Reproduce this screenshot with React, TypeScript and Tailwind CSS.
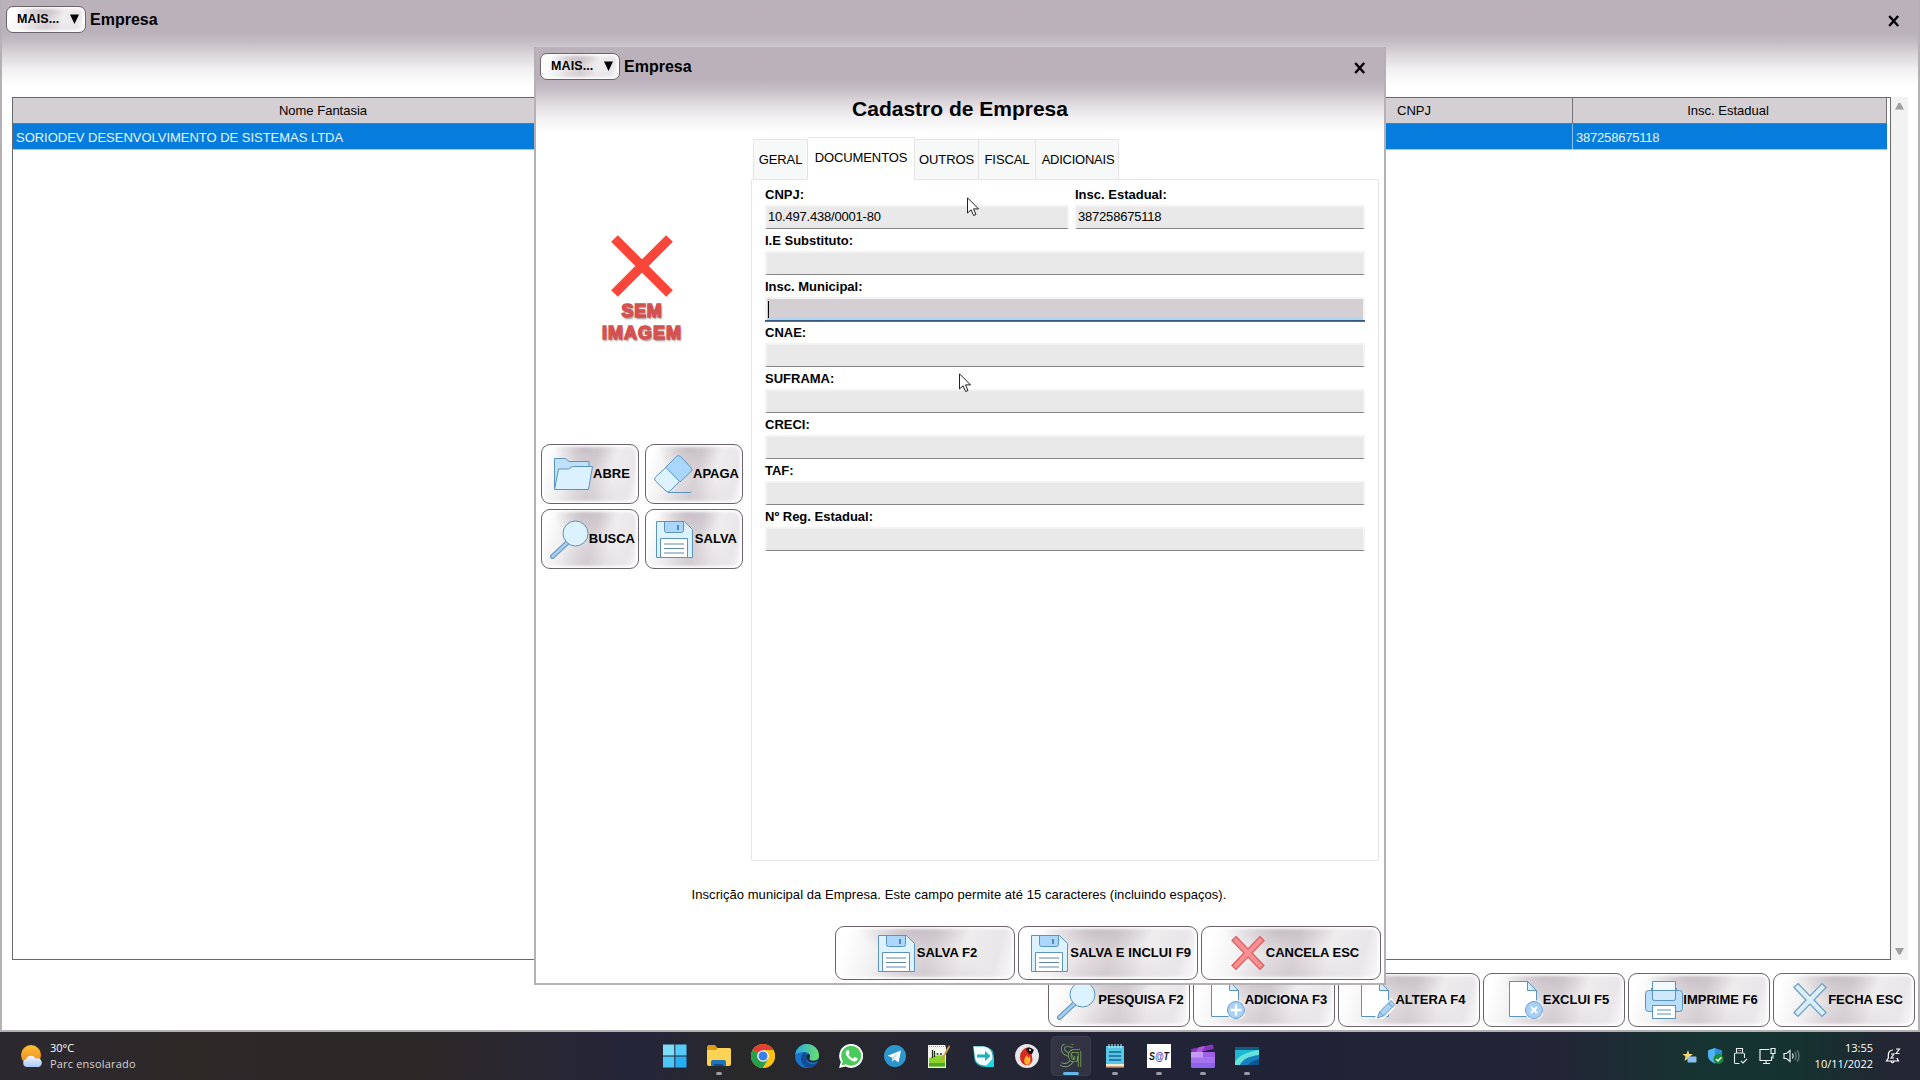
import type { ReactNode } from 'react';
import { clsx } from 'clsx';

type Field = { label: string; value?: string; focused?: boolean };

const FIELDS: Field[] = [
  { label: 'I.E Substituto:' },
  { label: 'Insc. Municipal:', focused: true },
  { label: 'CNAE:' },
  { label: 'SUFRAMA:' },
  { label: 'CRECI:' },
  { label: 'TAF:' },
  { label: 'Nº Reg. Estadual:' },
];

const TABS = [
  { label: 'GERAL', width: 'w-[55px]' },
  { label: 'DOCUMENTOS', width: 'w-[107px]', active: true },
  { label: 'OUTROS', width: 'w-[64px]' },
  { label: 'FISCAL', width: 'w-[57px]' },
  { label: 'ADICIONAIS', width: 'w-[83px]' },
];

const METAL =
  'border border-[#6b656b] bg-[radial-gradient(ellipse_32%_55%_at_44%_0%,rgba(186,176,184,0.75),transparent),radial-gradient(ellipse_34%_50%_at_52%_100%,rgba(200,192,198,0.5),transparent),linear-gradient(105deg,#ffffff_6%,#f3f2f3_22%,#e2dee1_40%,#dad5d9_52%,#efecee_70%,#e9e6e9_88%,#fbfbfb_100%)] shadow-[inset_0_0_3px_2px_rgba(255,255,255,0.9)]';

export default function App() {
  return (
    <div className="relative flex h-[1080px] w-[1920px] flex-col overflow-hidden bg-white font-['Liberation_Sans',Arial,sans-serif] text-[13px] text-black">
      <MainWindow />
      <Taskbar />
      <CompanyDialog />
      <Cursor className="left-[967px] top-[197px]" />
      <Cursor className="left-[959px] top-[373px]" />
    </div>
  );
}

function TitleBar() {
  return (
    <div className="flex h-[33px] shrink-0 items-end pl-[4px] pr-[18px]">
      <div className={clsx('flex h-[27px] w-[80px] items-center justify-between rounded-[7px] pb-px pl-[10px] pr-[6px]', METAL)}>
        <span className="text-[12.5px] font-bold tracking-[0.1px]">MAIS...</span>
        <svg width="9" height="10" viewBox="0 0 9 10">
          <path d="M0 0.5h9L4.5 10z" />
        </svg>
      </div>
      <span className="ml-[4px] flex-1 pb-[3px] text-[16px] font-bold leading-[20px]">Empresa</span>
      <svg className="mb-[6px]" width="12" height="12" viewBox="0 0 12 12">
        <path d="M1.200 1l9 10M10.200 1L1.200 11" stroke="#000" strokeWidth="2.400" />
      </svg>
    </div>
  );
}

function MainWindow() {
  return (
    <main className="flex h-[1032px] flex-col border-x-2 border-b-2 border-[#b4b0b4] bg-[linear-gradient(180deg,#bab2bb_0px,#bab1ba_33px,#c5bdc4_42px,#dad5da_54px,#f2f0f2_70px,#ffffff_86px)]">
      <TitleBar />
      <div className="mt-[64px] flex h-[863px] pl-[10px]">
        <div className="w-[1879px] border border-[#6a696c] bg-white pr-[3px]">
          <div className="flex h-[26px] border-b border-[#77727a] bg-[#d4cfd3] text-center leading-[25px]">
            <div className="w-[621px] border-r border-[#77727a]">Nome Fantasia</div>
            <div className="w-[622px] border-r border-[#77727a]" />
            <div className="w-[317px] border-r border-[#77727a]">CNPJ</div>
            <div className="flex-1 border-r border-[#77727a] pr-[3px]">Insc. Estadual</div>
          </div>
          <div className="flex h-[26px] border-b border-[#9ccdf2] bg-[#067cdc] leading-[27px] text-[#e4f6ff]">
            <div className="w-[1560px] whitespace-nowrap border-r border-[#8ec5f0] pl-[3px] tracking-[-0.02px]">
              SORIODEV DESENVOLVIMENTO DE SISTEMAS LTDA
            </div>
            <div className="pl-[3px] tracking-[-0.2px]">387258675118</div>
          </div>
        </div>
        <div className="flex w-[17px] flex-col items-center justify-between bg-[#f3f2f3] py-[5px]">
          <svg width="9" height="8" viewBox="0 0 9 8"><path d="M3.500 1h2L9 7.500H0z" fill="#a09ea0" /></svg>
          <svg width="9" height="8" viewBox="0 0 9 8"><path d="M3.500 7.500h2L9 1H0z" fill="#a09ea0" /></svg>
        </div>
      </div>
      <div className="mt-[13px] flex justify-end gap-[3px] pr-[3px]">
        <ActionButton label="PESQUISA F2" icon={<SearchIcon />} className="h-[54px] w-[142px] pl-[3px]" />
        <ActionButton label="ADICIONA F3" icon={<PageIcon kind="add" />} className="h-[54px] w-[142px] pl-[10px]" tight />
        <ActionButton label="ALTERA F4" icon={<PageIcon kind="edit" />} className="h-[54px] w-[142px] pl-[9px]" tight />
        <ActionButton label="EXCLUI F5" icon={<PageIcon kind="delete" />} className="h-[54px] w-[142px] pl-[10px]" tight />
        <ActionButton label="IMPRIME F6" icon={<PrinterIcon />} className="h-[54px] w-[142px] pl-[5px]" tight />
        <ActionButton label="FECHA ESC" icon={<CrossIcon fill="#d9effc" stroke="#6d9cc0" />} className="h-[54px] w-[142px] pl-[8px]" tight />
      </div>
    </main>
  );
}

function CompanyDialog() {
  return (
    <section className="absolute left-[534px] top-[47px] flex h-[938px] w-[852px] flex-col border-x-2 border-b-2 border-[#b4b0b4] bg-[linear-gradient(180deg,#bab2bb_0px,#bab1ba_33px,#c5bdc4_42px,#dad5da_54px,#f2f0f2_70px,#ffffff_86px)]">
      <TitleBar />
      <h1 className="mt-[17px] text-center text-[21px] font-bold leading-[24px]">Cadastro de Empresa</h1>
      <div className="mt-[16px] flex h-[724px]">
        {/* image preview and its actions */}
        <aside className="flex w-[215px] flex-col">
          <div className="flex h-[307px] flex-col items-center pr-[3px] pt-[98px]">
            <svg width="62" height="62" viewBox="0 0 62 62">
              <path d="M3.500 3.500l55 55M58.500 3.500l-55 55" stroke="#fa463a" strokeWidth="9.500" />
            </svg>
            <div className="mt-[3px] text-center text-[18px] font-bold leading-[22px] text-[#dc5555] [-webkit-text-stroke:1.5px_#d25050] [text-shadow:1px_2px_2px_#9a8585]">
              <div className="tracking-[0.7px]">SEM</div>
              <div className="tracking-[1px]">IMAGEM</div>
            </div>
          </div>
          <div className="grid grid-cols-[98px_98px] gap-x-[6px] gap-y-[5px] pl-[5px]">
            <ActionButton label="ABRE" icon={<FolderIcon />} className="h-[60px] pl-[4px]" tight />
            <ActionButton label="APAGA" icon={<EraserIcon />} className="h-[60px] pr-[3px]" end tight />
            <ActionButton label="BUSCA" icon={<SearchIcon />} className="h-[60px] pr-[3px]" end tight />
            <ActionButton label="SALVA" icon={<FloppyIcon />} className="h-[60px] pr-[5px]" end />
          </div>
        </aside>

        <div className="flex w-[628px] flex-col">
          <div className="flex h-[42px] items-end pl-[2px]">
            {TABS.map((t) => (
              <div
                key={t.label}
                className={clsx(
                  'relative flex items-center justify-center border-r border-t border-[#e4e4e6]',
                  t.width,
                  t.active ? 'z-10 -mb-px h-[43px] bg-white pb-[2px]' : 'h-[40px] bg-[#f7f8f8] pt-px',
                  t.label === 'GERAL' && 'border-l',
                  t.label === 'ADICIONAIS' ? 'pl-[2px] tracking-[-0.25px]' : 'tracking-[-0.1px]',
                )}
              >
                {t.label}
              </div>
            ))}
          </div>
          <div className="flex h-[682px] flex-col border border-[#e6e6e8] bg-white pl-[13px] pr-[13px] pt-[7px]">
            <div className="flex gap-[6px]">
              <div className="w-[304px]">
                <FieldRow label="CNPJ:" value="10.497.438/0001-80" />
              </div>
              <div className="flex-1">
                <FieldRow label="Insc. Estadual:" value="387258675118" />
              </div>
            </div>
            {FIELDS.map((f) => (
              <FieldRow key={f.label} {...f} />
            ))}
          </div>
        </div>
      </div>
      <p className="mt-[26px] pr-[2px] text-center text-[13px] leading-[16px] tracking-[0.05px]">
        Inscrição municipal da Empresa. Este campo permite até 15 caracteres (incluindo espaços).
      </p>
      <div className="mt-[23px] flex justify-end gap-[3px] pr-[3px]">
        <ActionButton label="SALVA F2" icon={<FloppyIcon />} className="h-[54px] w-[180px] pl-[5px]" />
        <ActionButton label="SALVA E INCLUI F9" icon={<FloppyIcon />} className="h-[54px] w-[180px] pr-[6px] tracking-[0.07px]" end />
        <ActionButton label="CANCELA ESC" icon={<CrossIcon fill="#fb8f8f" stroke="#d95c62" />} className="h-[54px] w-[180px] pl-[8px]" tight />
      </div>
    </section>
  );
}

function FieldRow({ label, value, focused }: Field) {
  return (
    <div className="flex h-[46px] flex-col">
      <span className="h-[18px] font-bold leading-[16px]">{label}</span>
      <div
        className={clsx(
          'flex items-center border-x-2 border-t-2 border-[#f3f3f3] pb-[1px] pl-[1px] tracking-[-0.2px]',
          focused
            ? 'h-[23px] bg-[#d4cfd2] shadow-[0_-2px_0_#b4d3ee_inset,0_1px_0_#355a7c,0_2px_0_#4b7196]'
            : 'h-[24px] border-b border-b-[#858585] bg-[#e9e9e9]',
        )}
      >
        {focused ? <span className="h-[17px] w-px bg-black" /> : value}
      </div>
    </div>
  );
}

type ActionButtonProps = { label: string; icon: ReactNode; className: string; end?: boolean; tight?: boolean };

function ActionButton({ label, icon, className, end, tight }: ActionButtonProps) {
  return (
    <button
      type="button"
      className={clsx(
        'flex items-center whitespace-nowrap rounded-[9px] font-bold',
        end ? 'justify-end' : 'justify-center',
        METAL,
        className,
      )}
    >
      {icon}
      <span className={tight ? 'ml-0' : 'ml-[2px]'}>{label}</span>
    </button>
  );
}

function FolderIcon() {
  return (
    <svg className="shrink-0" width="39" height="34" viewBox="0 0 39 34" stroke="#5c93bd" strokeWidth="1">
      <path d="M.5 32.500V1.500h11l3.500 3h20v9H5z" fill="#bfe0fa" />
      <path d="M.5 32.500L4.500 12h10l4-2.500h20L34.500 32.500z" fill="#dcf1fe" />
    </svg>
  );
}

function EraserIcon() {
  return (
    <svg className="shrink-0" width="39" height="40" viewBox="0 0 39 40" stroke="#5c93bd" strokeWidth="1">
      <path d="M11.500 13.500L22.500 2.500q2-2 4 0l10.500 11q2 2 0 4L26 28z" fill="#a9d6fb" />
      <path d="M12 13.500L25.500 27.500 16 37q-2 2-4 0L1.500 27q-2-2 0-4z" fill="#dff3ff" />
      <path d="M14 38.500h23" />
    </svg>
  );
}

function SearchIcon() {
  return (
    <svg className="shrink-0" width="39" height="39" viewBox="0 0 39 39" stroke="#5c93bd">
      <path d="M17.500 22.500L2.500 36.500" strokeWidth="5" strokeLinecap="round" />
      <path d="M17.500 22.500L2.500 36.500" stroke="#a4cdef" strokeWidth="3" strokeLinecap="round" />
      <circle cx="25.500" cy="13.500" r="12.500" fill="#dcf2fe" />
    </svg>
  );
}

function FloppyIcon() {
  return (
    <svg className="shrink-0" width="37" height="37" viewBox="0 0 37 37" stroke="#5c93bd">
      <path d="M.5.5h28l8 8v28H.5z" fill="#dcf2fe" />
      <path d="M8.500.5h19v9q0 2-2 2h-15q-2 0-2-2z" fill="#a9d6fa" />
      <path d="M22 4v5" stroke="#3f76a3" strokeWidth="1.600" />
      <path d="M4.500 36.500v-19h27v19z" fill="#fff" />
      <path d="M8 23h20M8 27.500h20M8 32h20" stroke="#5f87a8" />
    </svg>
  );
}

function CrossIcon({ fill, stroke }: { fill: string; stroke: string }) {
  return (
    <svg className="mr-[1px] shrink-0" width="34" height="36" viewBox="0 0 34 36">
      <path
        d="M5 1.500L17 14 29 1.500 33 5.500 21 18 33 30.500 29 34.500 17 22 5 34.500 1 30.500 13 18 1 5.500z"
        fill={fill}
        stroke={stroke}
        strokeWidth="1.200"
      />
    </svg>
  );
}

function PageIcon({ kind }: { kind: 'add' | 'edit' | 'delete' }) {
  return (
    <svg className="shrink-0" width="34" height="38" viewBox="0 0 34 38" stroke="#5c93bd">
      <path d="M.5.5h18l9 9v26H.5z" fill="#fff" />
      <path d="M18.500.5v9h9z" fill="#d5ecfd" />
      {kind === 'edit' ? (
        <g>
          <path d="M16 37.500l2-6.500L30 20l4 4-11.500 11.500z" fill="#b5dafa" stroke="#fff" strokeWidth="4" />
          <path d="M16.500 37l2-6L30 19.500l4 4L22.500 35z" fill="#a9d3f7" />
          <path d="M18.500 31l4 4M27.500 22l4 4" />
        </g>
      ) : (
        <g>
          <circle cx="25" cy="29" r="10" fill="#fff" stroke="none" />
          <circle cx="25" cy="29" r="8.500" fill="#a9d0f5" stroke="#6d9fd0" />
          {kind === 'add' ? (
            <path d="M25 23.500v11M19.500 29h11" stroke="#fff" strokeWidth="2.400" />
          ) : (
            <path d="M22 26l6 6M28 26l-6 6" stroke="#fff" strokeWidth="2" />
          )}
        </g>
      )}
    </svg>
  );
}

function PrinterIcon() {
  return (
    <svg className="shrink-0" width="38" height="38" viewBox="0 0 38 38" stroke="#5c93bd">
      <rect x="6.500" y="7.500" width="25" height="6" fill="#8fc3ef" />
      <rect x=".5" y="9.500" width="37" height="21" rx="3" fill="#b9defb" />
      <path d="M7.500.5h23v17q0 2-2 2h-19q-2 0-2-2z" fill="#f3faff" />
      <path d="M7.500 9.500h23v8q0 2-2 2h-19q-2 0-2-2z" fill="#cfe8fc" />
      <rect x="7.500" y="24.500" width="23" height="13" fill="#fff" />
      <path d="M12 29h14M12 33h14" />
    </svg>
  );
}

function Cursor({ className }: { className: string }) {
  return (
    <svg className={clsx('absolute', className)} width="13" height="20" viewBox="0 0 13 20">
      <path d="M.5.800v15.200l3.600-3.200 2.500 5.700 2.400-1-2.500-5.600h5z" fill="#fff" stroke="#222" />
    </svg>
  );
}

/* ---------- taskbar ---------- */

function Taskbar() {
  return (
    <footer className="relative flex h-[48px] shrink-0 items-center bg-[linear-gradient(90deg,#2b2930_0px,#2e2827_190px,#2c2727_420px,#24253a_640px,#292829_740px,#242634_960px,#202337_1280px,#222536_1560px,#163431_1700px,#14322f_1800px,#252634_1900px)] font-['Open_Sans','Noto_Sans',sans-serif] text-[11px] text-white">
      <div className="flex w-[653px] items-center gap-[6px] pl-[20px]">
        <svg width="24" height="24" viewBox="0 0 24 24">
          <defs>
            <linearGradient id="sun" x2="0" y2="1">
              <stop stopColor="#fbc02f" />
              <stop offset="1" stopColor="#ef8424" />
            </linearGradient>
            <linearGradient id="cloud" x2="0" y2="1">
              <stop stopColor="#f0f6ff" />
              <stop offset="1" stopColor="#aac8f5" />
            </linearGradient>
          </defs>
          <circle cx="11" cy="11" r="10" fill="url(#sun)" />
          <path d="M6.500 23a4 4 0 0 1-.3-7.800 5 5 0 0 1 9.300-.6 4.300 4.300 0 1 1 3.500 8.400z" fill="url(#cloud)" />
        </svg>
        <div className="leading-[16px]">
          <div>30°C</div>
          <div className="tracking-[0.18px] text-[#d6d2d6]">Parc ensolarado</div>
        </div>
      </div>
      <div className="flex items-center">
        {APPS.map((app) => (
          <div key={app.name} className="flex h-[48px] w-[44px] items-center justify-center">
            <div
              className={clsx(
                'relative flex h-[40px] w-[40px] items-center justify-center rounded-[4px]',
                app.state === 'active' && 'border border-[#3a3b4c] bg-[#323343]',
              )}
            >
              <svg width="24" height="24" viewBox="0 0 24 24">{app.art}</svg>
              {app.state === 'open' && <span className="absolute bottom-[1px] h-[3px] w-[6px] rounded-full bg-[#9c9ca6]" />}
              {app.state === 'active' && <span className="absolute bottom-0 h-[3px] w-[16px] rounded-full bg-[#62b8ea]" />}
            </div>
          </div>
        ))}
      </div>
      <div className="flex flex-1 items-center justify-end pr-[19px]">
        <Tray />
        <div className="ml-[12px] w-[60px] text-right leading-[16px]">
          <div>13:55</div>
          <div>10/11/2022</div>
        </div>
        <svg className="ml-[12px]" width="16" height="17" viewBox="0 0 16 17" fill="none" stroke="#fff" strokeWidth="1.200">
          <path d="M8 2C5 2 3.300 4 3.300 7v3L1.500 13h12l-1.600-3M6 13.500q1.500 2.500 3 0" />
          <path d="M6 6h3L6 10h3M11 1h3.500L11 5.500h3.500" strokeWidth="1.100" />
        </svg>
      </div>
    </footer>
  );
}

function Tray() {
  return (
    <div className="flex items-center gap-[9px]">
      <svg className="mr-px" width="15" height="15" viewBox="0 0 15 15">
        <path d="M6 1l1.300 4H11L8 7.500 9 12 6 9.500 2.500 12l1-4.500L.5 5h4z" fill="#f5d76a" />
        <rect x="5.500" y="7.500" width="9" height="6" rx="1" fill="#8cc0f0" />
      </svg>
      <svg width="17" height="18" viewBox="0 0 17 18">
        <path d="M8 1l7 2.500v5Q15 13 8 16.500 1 13 1 8.500v-5z" fill="#2b8fe0" />
        <path d="M8 1v15.500Q1 13 1 8.500v-5z" fill="#52b4f3" />
        <circle cx="11.500" cy="12" r="5" fill="#1b8a34" />
        <path d="M9 12l2 2 3.300-3.800" fill="none" stroke="#fff" strokeWidth="1.400" />
      </svg>
      <svg width="15" height="18" viewBox="0 0 15 18" fill="none" stroke="#e8eeee" strokeWidth="1.100">
        <path d="M3.500 6V1.500h6V6M1.500 16V7.500Q1.500 6 3 6h7q1.500 0 1.500 1.500V11M1.500 16.500h5M8 14l2 2 4-4M5.500 3.500h.8M7.300 3.500H8" />
      </svg>
      <svg className="ml-[2px]" width="17" height="18" viewBox="0 0 17 18" fill="none" stroke="#e8eeee" strokeWidth="1.200">
        <path d="M10.500 2.500H1v11h11.500v-4M4 16.500h7M7 13.500v3M12 1.500h4v5h-4zM14 6.500v5" />
      </svg>
      <svg className="-ml-[2px]" width="18" height="16" viewBox="0 0 18 16" fill="none" stroke="#e8eeee" strokeWidth="1.200">
        <path d="M1 5.500h2.500L7 2.500v11l-3.500-3H1zM9.500 5.500q1.500 2.500 0 5" />
        <path d="M11.800 3.800q2.700 4.200 0 8.400M14.200 2.200q3.600 5.800 0 11.600" stroke="#6f8583" />
      </svg>
    </div>
  );
}

type TaskApp = { name: string; state?: 'open' | 'active'; art: ReactNode };

const APPS: TaskApp[] = [
  {
    name: 'start',
    art: (
      <g>
        <path d="M0 .5h11.300v11H0z" fill="#7ddcfb" />
        <path d="M12.300.5h11.200v11H12.300z" fill="#57cbf8" />
        <path d="M0 12.500h11.300v11H0z" fill="#4cc5f7" />
        <path d="M12.300 12.500h11.200v11H12.300z" fill="#28acf2" />
      </g>
    ),
  },
  {
    name: 'explorer',
    state: 'open',
    art: (
      <g>
        <path d="M0 3q0-2 2-2h6l2.500 3H22q2 0 2 2v3H0z" fill="#dd9b18" />
        <path d="M0 6h9l2-2h11q2 0 2 2v14q0 2-2 2H2q-2 0-2-2z" fill="#fcd354" />
        <path d="M4 22v-4q0-2 2-2h11q2 0 2 2v4z" fill="#1f73b9" />
        <path d="M7 22v-2h9v2z" fill="#114b86" />
      </g>
    ),
  },
  {
    name: 'chrome',
    art: (
      <g>
        <circle cx="12" cy="12" r="12" fill="#fbc116" />
        <path d="M12 12L1.600 6a12 12 0 0 1 20.800 0z" fill="#e23e31" />
        <path d="M12 12L1.600 6A12 12 0 0 0 12 24l5-9z" fill="#279f4c" />
        <path d="M12 6h10.400A12 12 0 0 1 12 24l5.200-9z" fill="#fbc116" />
        <circle cx="12" cy="12" r="5.800" fill="#fff" />
        <circle cx="12" cy="12" r="4.500" fill="#3a7ded" />
      </g>
    ),
  },
  {
    name: 'edge',
    art: (
      <g>
        <defs>
          <linearGradient id="edge-top">
            <stop stopColor="#2aa9e6" />
            <stop offset="1" stopColor="#6be066" />
          </linearGradient>
        </defs>
        <circle cx="12" cy="12" r="12" fill="#1774c8" />
        <path d="M.2 10A12 12 0 0 1 24 11c0 4-3 6-6 6-3.500 0-4.500-1.500-3.500-3 1-2 .5-6-5-6-4 0-7.500 1-9.300 2z" fill="url(#edge-top)" />
        <path d="M8 9c-4 5-2 13 6 15 4-.3 7-2.500 8.500-5-9 3-13-2-10.500-7.500C11.500 9 10 8 8 9z" fill="#124b96" />
        <path d="M14.500 14c1-2 .3-4-1.500-4-2 1.500-2.500 6 2 8 3 1 6 .5 8-1.500 1-1.200 0-1.500-2-.3-4 1.300-7.500-.2-6.500-2.200z" fill="#24242e" />
      </g>
    ),
  },
  {
    name: 'whatsapp',
    art: (
      <g>
        <path d="M0 24l1.800-6A12 12 0 1 1 6.500 22.500z" fill="#fff" />
        <path d="M2.500 21.500l1.300-4.300A10 10 0 1 1 7 20.300z" fill="#4ccb5d" />
        <path d="M8.500 6q-2.500 1.500-1.500 4.500 2 5 7.500 7 3 .5 4-2v-1.300L15.500 13l-1.500 1.700q-3-1.300-4.500-4.200l1.200-1.500L9.500 6z" fill="#fff" />
      </g>
    ),
  },
  {
    name: 'telegram',
    art: (
      <g>
        <circle cx="12" cy="12" r="11" fill="#2c96cf" />
        <path d="M4.500 11.800L18 6.500l-2.500 12-4-3-2 2-.5-4z" fill="#fff" />
        <path d="M9 13.500l6.500-5-4.500 6.500-1.500 2.500z" fill="#bcdcf0" />
      </g>
    ),
  },
  {
    name: 'notepad++',
    art: (
      <g>
        <path d="M1 1h17l1 3v20H1z" fill="#f4f6ee" />
        <path d="M2 14q8-4 16-2v10.500H2z" fill="#8ad42d" />
        <path d="M2 19h16v3.500H2z" fill="#4dab23" />
        <path d="M2 2.500h15" stroke="#999" strokeDasharray="1 1" />
        <path d="M5.500 6v8M7.500 7v6M9.500 10h2M13 10h2" stroke="#223022" strokeWidth="1.300" />
        <path d="M22 1L14 15l-1 3 2.500-2L23 3z" fill="#c99e4d" />
      </g>
    ),
  },
  {
    name: 'remote',
    art: (
      <g>
        <path d="M2 2h11q10 2 10 10v11H12q-9-2-9-10z" fill="#1c9fae" />
        <path d="M2.500 2.500h10q8 1 9 9v10h-8q-9-1-9.500-8z" fill="#f4ffff" />
        <path d="M6 10.500h8V7l5.500 5-5.500 5v-3.500H6z" fill="#21b0bd" />
        <path d="M14 23l9-10v10z" fill="#18dbe1" />
      </g>
    ),
  },
  {
    name: 'firebird',
    art: (
      <g>
        <circle cx="12" cy="12" r="12" fill="#e5e5ea" />
        <path d="M14 3q-9 2-9 9.500T12 21.500q7-2 5-9-1-3 1-6-2-3-4-3.500z" fill="#d92a20" />
        <path d="M12 21q-4-2-2.500-6l2-4 2 3 1-2q3 7-2.500 9z" fill="#fbb429" />
        <path d="M11 5q4-3 8 1l-2 4q-4 1-6-5z" fill="#141013" />
        <circle cx="15" cy="6" r=".9" fill="#fff" />
      </g>
    ),
  },
  {
    name: 'sg',
    state: 'active',
    art: (
      <g fill="none">
        <path d="M14 2Q3-1 4 6q1 3 6 5 5 3 2 7-4 5-10 2" stroke="#84a57c" strokeWidth="4" />
        <path d="M14 2Q3-1 4 6q1 3 6 5 5 3 2 7-4 5-10 2" stroke="#30353c" strokeWidth="2.400" />
        <path d="M21 7h-7q-4 1-3 6t6 3v-4M20.500 7v16" stroke="#7fa552" strokeWidth="3.400" />
        <path d="M21 7h-7q-4 1-3 6t6 3v-4M20.500 7v16" stroke="#31383a" strokeWidth="1.800" />
      </g>
    ),
  },
  {
    name: 'notepad',
    state: 'open',
    art: (
      <g>
        <path d="M3 2h18v19H3z" fill="#58c6e5" />
        <path d="M3 20h18v3H3z" fill="#f0ead8" />
        <path d="M3 22.500h18v1.500H3z" fill="#b4662c" />
        <path d="M6 0v4M9 0v4M12 0v4M15 0v4M18 0v4" stroke="#d8f4fc" />
        <path d="M6 8h12M6 12h12M6 16h12" stroke="#146590" strokeWidth="1.500" />
      </g>
    ),
  },
  {
    name: 'sat',
    state: 'open',
    art: (
      <g>
        <path d="M0 0h24v24H0z" fill="#fff" />
        <text x="2" y="16" fontSize="10.500" fill="#171717" fontFamily="Liberation Sans" fontStyle="italic" fontWeight="700" textLength="20" lengthAdjust="spacingAndGlyphs">
          S<tspan fill="#4743c4">@</tspan>T
        </text>
      </g>
    ),
  },
  {
    name: 'clips',
    state: 'open',
    art: (
      <g>
        <path d="M0 5L21 .5q1.500 0 1.500 2V5L1 10z" fill="#8437b8" />
        <path d="M8 3.300l6-1.200-3 5.700-7 1.500z" fill="#b15bdb" />
        <path d="M0 8h24v14q0 2-2 2H2q-2 0-2-2z" fill="#a673f0" />
        <path d="M0 8h24v5.500H0z" fill="#c69bf8" />
        <path d="M12 8h12v5.500H12z" fill="#a05fe6" />
        <path d="M0 19h24v3q0 2-2 2H2q-2 0-2-2z" fill="#8e62ea" />
      </g>
    ),
  },
  {
    name: 'media',
    state: 'open',
    art: (
      <g>
        <path d="M0 3h24v18H0z" fill="#1cb9d1" />
        <path d="M0 3h24v3H0z" fill="#125a84" />
        <path d="M0 18Q5 9 24 6v6Q9 14 6 21H0z" fill="#67e2de" />
        <path d="M5 21q3-8 19-10v10z" fill="#1580bb" />
        <path d="M13 21q3-4 11-6v6z" fill="#0d558f" />
      </g>
    ),
  },
];
